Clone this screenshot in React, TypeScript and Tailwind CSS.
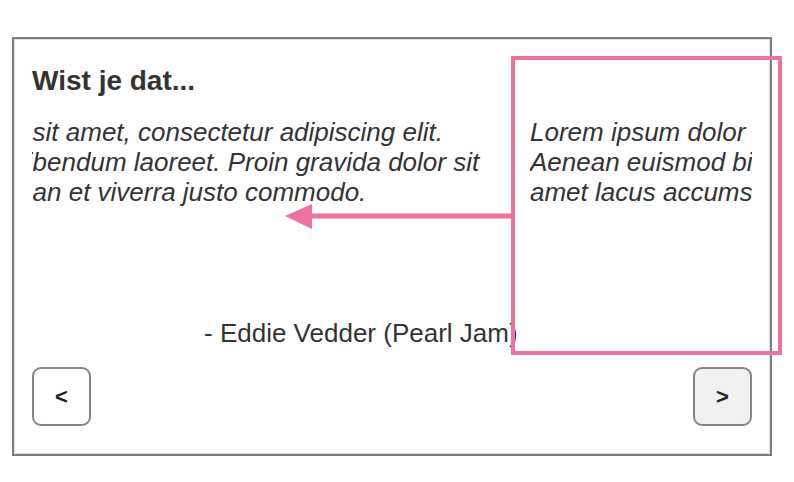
export default function App() {
  const lines = [
    "Lorem ipsum dolor sit amet, consectetur adipiscing elit.",
    "Aenean euismod bibendum laoreet. Proin gravida dolor sit",
    "amet lacus accumsan et viverra justo commodo.",
  ];

  const paragraph = (
    <p className="whitespace-nowrap text-[26px] italic leading-[30px] text-[#333]">
      {lines.map((l) => (
        <span key={l} className="block">
          {l}
        </span>
      ))}
    </p>
  );

  return (
    <div
      className="relative h-[482px] w-[794px] bg-white pl-[12px] pt-[37px]"
      style={{ fontFamily: '"Liberation Sans", Arial, sans-serif' }}
    >
      {/* carousel card */}
      <div className="flex h-[419px] w-[760px] flex-col border-2 border-[#7d7d7d] px-[18px] pb-[28px] pt-[26px] shadow-[inset_0_0_0_1px_#e2e2e2]">
        <h2 className="text-[28px] font-bold leading-[32px] text-[#333]">Wist je dat...</h2>

        <div className="mt-[20px] flex gap-[20px]">
          <div className="w-[478px] overflow-hidden">
            <div className="-ml-[222px]">{paragraph}</div>
          </div>
          <div className="w-[222px] overflow-hidden">{paragraph}</div>
        </div>

        <p className="mt-[111px] pl-[172px] text-[26px] leading-[30px] text-[#333]">
          - Eddie Vedder (Pearl Jam)
        </p>

        <div className="mt-[19px] flex justify-between">
          <button className="flex h-[59px] w-[59px] items-center justify-center rounded-[9px] border-2 border-[#858585] bg-white text-[22px] font-bold text-[#222]">
            &lt;
          </button>
          <button className="flex h-[59px] w-[59px] items-center justify-center rounded-[9px] border-2 border-[#858585] bg-[#f1f1f1] text-[22px] font-bold text-[#222]">
            &gt;
          </button>
        </div>
      </div>

      {/* annotation overlay: viewport frame + arrow */}
      <div className="absolute left-[511px] top-[56px] h-[299px] w-[271px] border-4 border-[#ee72a0]" />
      <svg className="absolute left-0 top-0" width="794" height="482">
        <line x1="308" y1="216" x2="513" y2="216" stroke="#ee72a0" strokeWidth="5" />
        <polygon points="285,216 312,204 312,229" fill="#ee72a0" />
      </svg>
    </div>
  );
}
